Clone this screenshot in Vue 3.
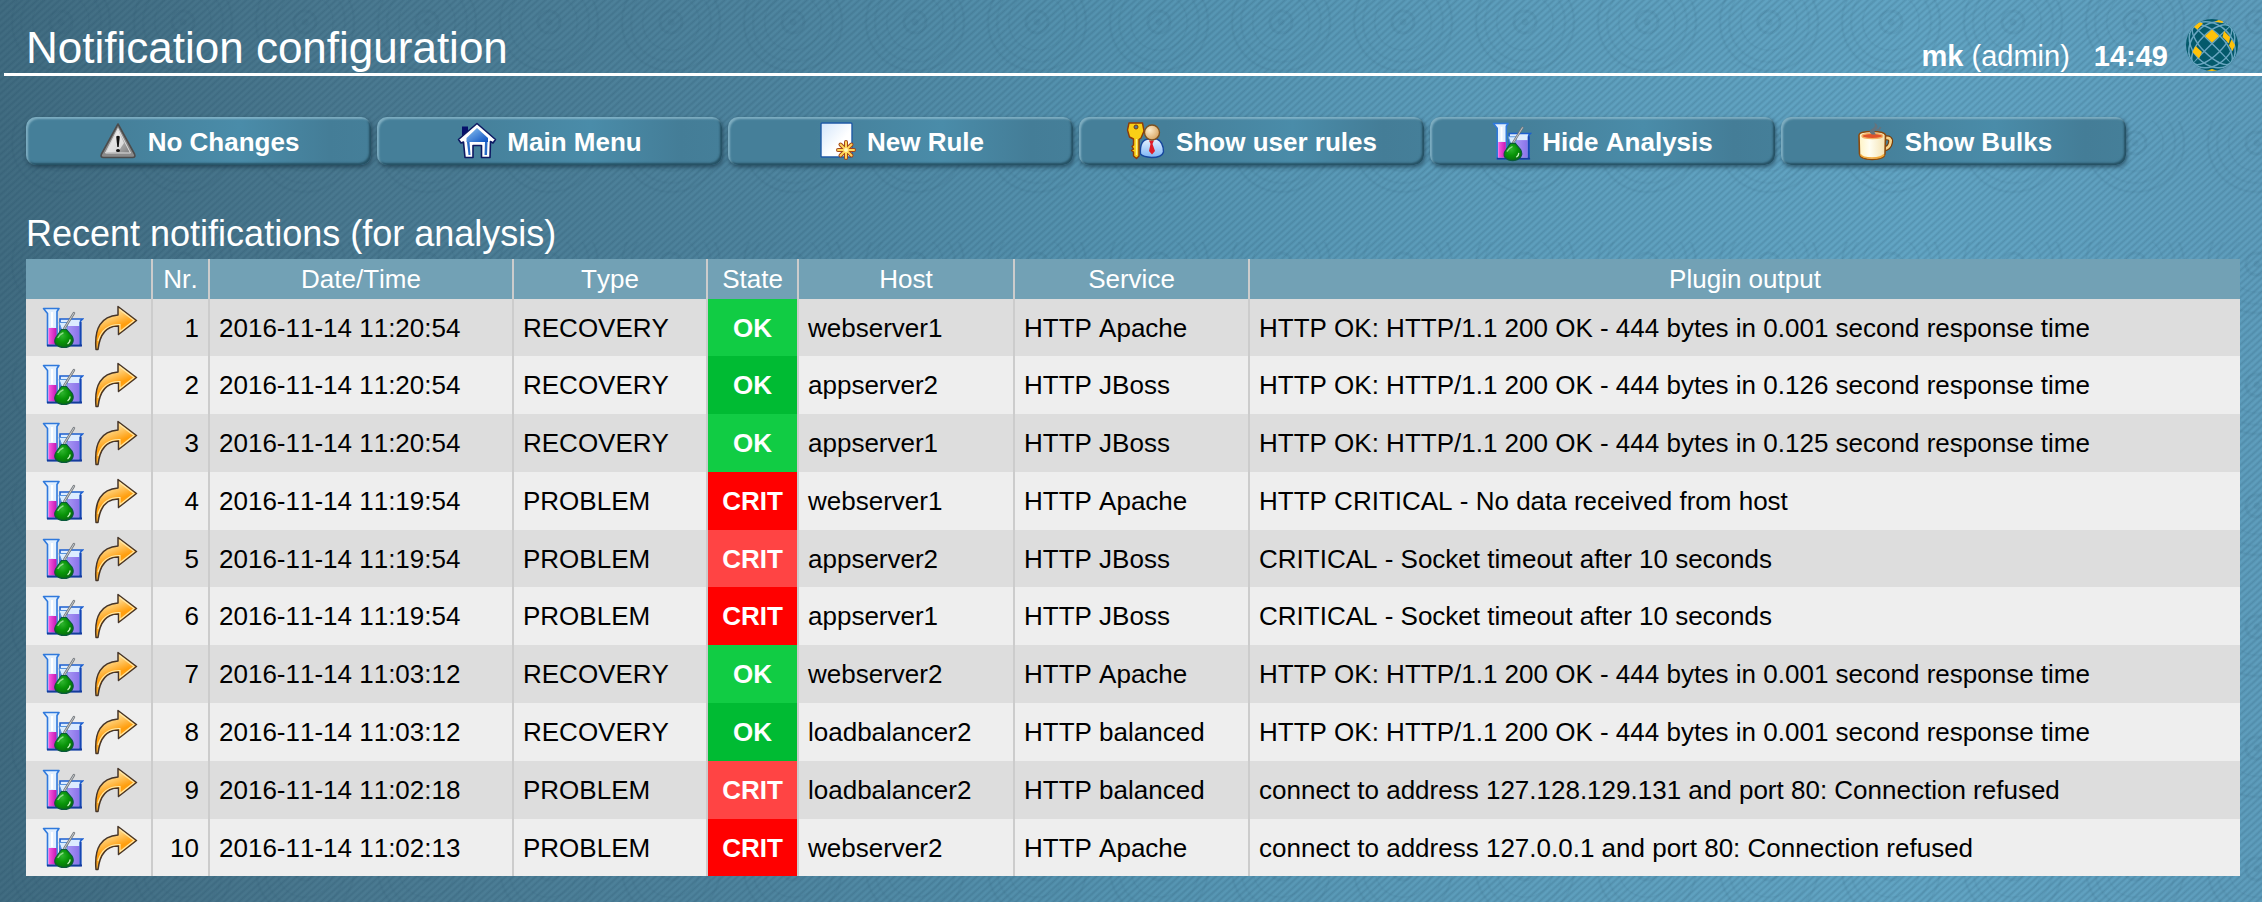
<script setup>
const actions = [
  { icon: 'warning', label: 'No Changes' },
  { icon: 'home', label: 'Main Menu' },
  { icon: 'new', label: 'New Rule' },
  { icon: 'users', label: 'Show user rules' },
  { icon: 'analyze', label: 'Hide Analysis' },
  { icon: 'bulk', label: 'Show Bulks' },
]

const columns = ['', 'Nr.', 'Date/Time', 'Type', 'State', 'Host', 'Service', 'Plugin output']

const httpOk = (t) => `HTTP OK: HTTP/1.1 200 OK - 444 bytes in ${t} second response time`

const rows = [
  ['2016-11-14 11:20:54', 'RECOVERY', 'OK', 'webserver1', 'HTTP Apache', httpOk('0.001')],
  ['2016-11-14 11:20:54', 'RECOVERY', 'OK', 'appserver2', 'HTTP JBoss', httpOk('0.126')],
  ['2016-11-14 11:20:54', 'RECOVERY', 'OK', 'appserver1', 'HTTP JBoss', httpOk('0.125')],
  ['2016-11-14 11:19:54', 'PROBLEM', 'CRIT', 'webserver1', 'HTTP Apache', 'HTTP CRITICAL - No data received from host'],
  ['2016-11-14 11:19:54', 'PROBLEM', 'CRIT', 'appserver2', 'HTTP JBoss', 'CRITICAL - Socket timeout after 10 seconds'],
  ['2016-11-14 11:19:54', 'PROBLEM', 'CRIT', 'appserver1', 'HTTP JBoss', 'CRITICAL - Socket timeout after 10 seconds'],
  ['2016-11-14 11:03:12', 'RECOVERY', 'OK', 'webserver2', 'HTTP Apache', httpOk('0.001')],
  ['2016-11-14 11:03:12', 'RECOVERY', 'OK', 'loadbalancer2', 'HTTP balanced', httpOk('0.001')],
  ['2016-11-14 11:02:18', 'PROBLEM', 'CRIT', 'loadbalancer2', 'HTTP balanced', 'connect to address 127.128.129.131 and port 80: Connection refused'],
  ['2016-11-14 11:02:13', 'PROBLEM', 'CRIT', 'webserver2', 'HTTP Apache', 'connect to address 127.0.0.1 and port 80: Connection refused'],
].map(([time, type, state, host, service, output], i) => ({ nr: i + 1, time, type, state, host, service, output }))

const meridians = [-20, -12, -1, 10, 19].map(
  (u) => `M0 -26A${Math.abs(u)} 26 0 0 ${u > 0 ? 1 : 0} 0 26`,
)
</script>

<template>
  <div class="page">
    <!-- shared gradients and symbols -->
    <svg class="defs" width="0" height="0" aria-hidden="true">
      <defs>
        <linearGradient id="g-grey" x1="0" y1="0" x2="1" y2="1">
          <stop offset="0" stop-color="#f4f4f4" /><stop offset="1" stop-color="#7d7d7d" />
        </linearGradient>
        <linearGradient id="g-house" x1="0" y1="0" x2="1" y2="1">
          <stop offset="0" stop-color="#8cc4f2" /><stop offset="1" stop-color="#0a4fc0" />
        </linearGradient>
        <linearGradient id="g-paper" x1="0" y1="0" x2="1" y2="1">
          <stop offset="0" stop-color="#d3e5fb" /><stop offset="0.6" stop-color="#ffffff" />
        </linearGradient>
        <linearGradient id="g-arrow" x1="0" y1="0" x2="0.4" y2="1">
          <stop offset="0" stop-color="#fff0cc" /><stop offset="0.35" stop-color="#ffce73" />
          <stop offset="0.6" stop-color="#ff9d0c" /><stop offset="1" stop-color="#ffc04a" />
        </linearGradient>
        <radialGradient id="g-green" cx="0.4" cy="0.35" r="0.7">
          <stop offset="0" stop-color="#2fb52f" /><stop offset="0.5" stop-color="#089408" /><stop offset="1" stop-color="#066a0e" />
        </radialGradient>
        <radialGradient id="g-head" cx="0.35" cy="0.35" r="0.7">
          <stop offset="0" stop-color="#fdeccb" /><stop offset="1" stop-color="#d9a561" />
        </radialGradient>
        <linearGradient id="g-coat" x1="0" y1="0" x2="0" y2="1">
          <stop offset="0" stop-color="#e4f1ff" /><stop offset="1" stop-color="#7db5f7" />
        </linearGradient>
        <linearGradient id="g-cup" x1="0" y1="0" x2="1" y2="0">
          <stop offset="0" stop-color="#fff3c4" /><stop offset="0.4" stop-color="#fffef2" /><stop offset="1" stop-color="#f4e2b0" />
        </linearGradient>
        <linearGradient id="g-pink" x1="0" y1="0" x2="1" y2="0">
          <stop offset="0" stop-color="#f95fe0" /><stop offset="1" stop-color="#c416b4" />
        </linearGradient>
        <linearGradient id="g-violet" x1="0" y1="0" x2="1" y2="0">
          <stop offset="0" stop-color="#b3a6f7" /><stop offset="1" stop-color="#8a72ea" />
        </linearGradient>
      </defs>

      <symbol id="i-warning" viewBox="0 0 40 40">
        <path d="M20 2L36.500 32Q38 35.500 34.500 35.500H5.500Q2 35.500 3.500 32Z" fill="#8b8b8b" stroke="#4c4c4c" stroke-width="1.600" stroke-linejoin="round" />
        <path d="M20 6.500L32.500 31H7.500Z" fill="url(#g-grey)" stroke="#dedede" stroke-width="1" />
        <path d="M20 8L26 21L20 30H8.500Z" fill="#fff" opacity="0.6" />
        <path d="M18.200 14.500Q20 13 21.800 14.500L20.700 25H19.300Z" fill="#111" />
        <ellipse cx="20" cy="28.500" rx="2" ry="1.600" fill="#111" />
      </symbol>

      <symbol id="i-home" viewBox="0 0 40 40">
        <path d="M5 4.500H11V15H5Z" fill="#06106b" />
        <path d="M20 1.500L38.500 17.500L36 21L33.500 19.500L33 35.500H24.500V23.500H16V35.500H8L6.500 20L4 21L1.500 17.500Z" fill="#fff" stroke="#0d1a63" stroke-width="1.600" stroke-linejoin="round" />
        <path d="M20 6L31 16V20H9.500V16Z" fill="url(#g-house)" />
        <path d="M28 20H30.500L30 33H27.500ZM10 20H12.500L13.500 33H11.500Z" fill="#2a6cc8" />
      </symbol>

      <symbol id="i-new" viewBox="0 0 40 40">
        <rect x="4" y="1" width="31" height="34" rx="1" fill="url(#g-paper)" stroke="#1f5aa6" stroke-width="1.400" />
        <g stroke-linecap="round">
          <path d="M29 20V36M21 28H37M23.500 22.500L34.500 33.500M34.500 22.500L23.500 33.500" stroke="#a3461a" stroke-width="4" />
          <path d="M29 20V36M21 28H37M23.500 22.500L34.500 33.500M34.500 22.500L23.500 33.500" stroke="#ffd75c" stroke-width="2" />
        </g>
        <circle cx="29" cy="28" r="2" fill="#fff7b5" />
      </symbol>

      <symbol id="i-users" viewBox="0 0 40 40">
        <path d="M14.500 32Q13.500 18 22 17H31Q37.500 20 37.500 30Q36 35.500 25.500 35.500Q17 35 14.500 32Z" fill="url(#g-coat)" stroke="#16479e" stroke-width="1.400" />
        <path d="M23 18.500H28L26.500 22L29 29L26 32.500L23 29L24.500 22Z" fill="#df1c27" />
        <circle cx="26" cy="10.500" r="7.500" fill="url(#g-head)" stroke="#7d511f" stroke-width="1.300" />
        <path d="M3 1H16.500L18 9L15 16L13 17.500L13 34L10.500 36.500L7.500 34L7.500 30L5.500 28.500L7.500 27L6 24.500L7.500 23V17L3.500 15L1.500 8Z" fill="#f9cf16" stroke="#8d3b08" stroke-width="1.400" stroke-linejoin="round" />
        <circle cx="10" cy="5" r="2" fill="#4b78a0" stroke="#7d3b08" stroke-width="1" />
        <path d="M10.500 17V33" stroke="#fff08c" stroke-width="1.400" />
      </symbol>

      <symbol id="i-analyze" viewBox="0 0 42 42">
        <path d="M18 12H40.500L38.500 14V38.500H18Z" fill="#dcecff" stroke="#1c5fd0" stroke-width="1.600" />
        <path d="M20 19H37.500V37.500H20Z" fill="url(#g-violet)" />
        <path d="M38.500 15V38.500" stroke="#1746b3" stroke-width="2" />
        <path d="M1.500 1.500H17L15 4.500V38.500H5.500V6.500Z" fill="#e2f0ff" stroke="#2f79dc" stroke-width="1.600" stroke-linejoin="round" />
        <path d="M6.500 21H14.500V37.500H6.500Z" fill="url(#g-pink)" />
        <path d="M10 5V20" stroke="#fff" stroke-width="2" />
        <path d="M5 38.500H40" stroke="#153a9b" stroke-width="2" />
        <path d="M17 15.500H26L24.500 23.500H20Z" fill="#d8ecff" stroke="#5693dc" stroke-width="1" />
        <path d="M32 6L22 22" stroke="#74787c" stroke-width="2.400" stroke-linecap="round" />
        <path d="M32 6L22 22" stroke="#dcdfe2" stroke-width="0.800" stroke-linecap="round" />
        <path d="M19.500 22.500H24.500L30 29Q32.500 33.500 30 37Q27 40.500 22 40.500T13.500 37Q11.500 33.500 14.500 29.500Z" fill="url(#g-green)" stroke="#0a5a3c" stroke-width="1.200" />
        <path d="M16 30.500Q18 27 21 26" fill="none" stroke="#8fdd8a" stroke-width="1.400" stroke-linecap="round" />
        <path d="M26 36.500Q28 35 28 33" fill="none" stroke="#c6f3c0" stroke-width="1.400" stroke-linecap="round" />
      </symbol>

      <symbol id="i-bulk" viewBox="0 0 40 40">
        <path d="M30 16Q36.500 15 35.500 20.500Q34.500 26 29 27" fill="none" stroke="#7a3e09" stroke-width="5" />
        <path d="M30 16Q36.500 15 35.500 20.500Q34.500 26 29 27" fill="none" stroke="#f7d48c" stroke-width="2.600" />
        <path d="M4 13Q4.500 9.500 17 9.500Q29.500 9.500 30.500 13L30 32Q29.500 37 17 37.500Q5 37 4.500 32Z" fill="url(#g-cup)" stroke="#8d4a0c" stroke-width="1.600" />
        <path d="M5.500 32.500Q7 36 17 36T29 32.500" fill="none" stroke="#f2a93a" stroke-width="1.600" />
        <ellipse cx="17.300" cy="14" rx="10.500" ry="2.600" fill="#e0532a" stroke="#f3b062" stroke-width="1.200" />
        <path d="M17 12.500Q12 9.500 17.500 6.500Q21.500 4 19 0.500Q25 3.500 21 7.500Q18 9.500 21 12.500Z" fill="#66737c" />
        <path d="M21.500 8Q25 8 25.500 5" fill="none" stroke="#66737c" stroke-width="1.600" />
      </symbol>

      <symbol id="i-arrow" viewBox="0 0 44 46">
        <path d="M24 1.500L42.500 15.500L24.500 29.500V21Q7 20.500 4 44.500H2Q-1 12 24 10Z" fill="url(#g-arrow)" stroke="#463528" stroke-width="1.500" stroke-linejoin="round" />
        <path d="M25.500 4.500L40 15.500L26 26.500V19.500Q9 19 4 36" fill="none" stroke="#ffe9a8" stroke-width="1.100" />
      </symbol>
    </svg>

    <header class="top">
      <h1>Notification configuration</h1>
      <div class="status">
        <span><b>mk</b> (admin)</span>
        <b>14:49</b>
        <svg class="globe" viewBox="0 0 52 52" aria-hidden="true">
          <clipPath id="ball"><circle cx="26" cy="26" r="26" /></clipPath>
          <g clip-path="url(#ball)">
            <rect width="52" height="52" fill="#045a6c" />
            <g transform="translate(26 26) rotate(45)" fill="none" stroke="#68a5c0" stroke-width="1.500">
              <path v-for="d in meridians" :key="d" :d="d" />
              <path v-for="d in meridians" :key="'r' + d" :d="d" transform="rotate(90)" />
            </g>
            <g fill="#ffc20a">
              <path d="M26 10.500L33 17L26 23.500L19 17Z" />
              <path d="M38 12L44 18L43 24.500L36.500 18Z" />
              <path d="M45.500 20.500L49 26L46.500 32L43 26.500Z" />
              <path d="M9.500 27L16 33L13 39.500L6.500 33Z" />
              <path d="M8 8L13 3L17 4.500L11.500 10.500Z" />
              <path d="M28.500 2.500L33 1H38L36.500 4Z" />
              <path d="M20 52L26 50L32 52Z" />
            </g>
          </g>
        </svg>
      </div>
    </header>

    <nav class="actions">
      <a v-for="a in actions" :key="a.label" href="#" class="action">
        <svg class="action-icon" aria-hidden="true"><use :href="'#i-' + a.icon" /></svg>
        <span>{{ a.label }}</span>
      </a>
    </nav>

    <main>
      <h2 id="recent">Recent notifications (for analysis)</h2>
      <table aria-labelledby="recent">
        <colgroup>
          <col class="c-icons" /><col class="c-nr" /><col class="c-time" /><col class="c-type" />
          <col class="c-state" /><col class="c-host" /><col class="c-service" /><col />
        </colgroup>
        <thead>
          <tr><th v-for="c in columns" :key="c" scope="col">{{ c }}</th></tr>
        </thead>
        <tbody>
          <tr v-for="r in rows" :key="r.nr">
            <td>
              <div class="tools">
                <a href="#" :aria-label="'Analyze notification ' + r.nr"><svg class="tool-analyze"><use href="#i-analyze" /></svg></a>
                <a href="#" :aria-label="'Replay notification ' + r.nr"><svg class="tool-arrow"><use href="#i-arrow" /></svg></a>
              </div>
            </td>
            <td class="nr">{{ r.nr }}</td>
            <td>{{ r.time }}</td>
            <td>{{ r.type }}</td>
            <td class="state" :class="r.state.toLowerCase()">{{ r.state }}</td>
            <td>{{ r.host }}</td>
            <td>{{ r.service }}</td>
            <td>{{ r.output }}</td>
          </tr>
        </tbody>
      </table>
    </main>
  </div>
</template>

<style>
body {
  margin: 0;
  min-height: 100vh;
  background:
    radial-gradient(circle at 61px 22px, rgba(30, 70, 95, 0.08) 0 3px, transparent 4px 9px, rgba(30, 70, 95, 0.08) 10px 12px, transparent 13px 27px, rgba(30, 70, 95, 0.07) 28px, transparent 30px 38px, rgba(30, 70, 95, 0.07) 40px, transparent 42px 47px, rgba(30, 70, 95, 0.09) 49px, transparent 51px) 0 0 / 122px 121px,
    repeating-linear-gradient(138deg, rgba(20, 60, 85, 0.17) 0, rgba(20, 60, 85, 0) 2px, rgba(20, 60, 85, 0) 3px, rgba(20, 60, 85, 0.17) 5px),
    linear-gradient(90deg, #416c81 0%, #4a7990 15%, #4e849e 33%, #5594b1 50%, #5e9fbd 68%, #62a5c4 85%, #5e9dbc 100%);
}
</style>

<style scoped>
.page {
  font-family: "Liberation Sans", Arial, sans-serif;
  font-size: 26px;
  line-height: 30px;
  font-kerning: none;
  color: #fff;
}
.defs { position: absolute; }
.top {
  display: flex;
  justify-content: space-between;
  align-items: flex-end;
  box-sizing: border-box;
  height: 76px;
  margin-left: 4px;
  padding: 0 24px 0 22px;
  border-bottom: 3px solid #fff;
}
h1 {
  margin: 0;
  font-size: 44px;
  line-height: 50px;
  font-weight: 400;
}
.status {
  display: flex;
  align-items: flex-end;
  gap: 24px;
  font-size: 29px;
  line-height: 34px;
}
.globe {
  width: 52px;
  height: 52px;
  margin-left: -6px;
  margin-bottom: 2px;
}
.actions {
  display: flex;
  flex-wrap: wrap;
  gap: 6px;
  padding: 41px 22px 0 26px;
}
.action {
  display: flex;
  align-items: center;
  justify-content: center;
  gap: 10px;
  box-sizing: border-box;
  width: 345px;
  height: 48px;
  padding-top: 2px;
  border-radius: 10px;
  color: #fff;
  font-weight: 700;
  text-decoration: none;
  background: linear-gradient(90deg, #457f99 0%, #457f99 25%, #4a8ca9 62%, #447d97 88%, #457f99 100%);
  box-shadow:
    inset 2px 2px 2px rgba(165, 205, 220, 0.6),
    inset -2px -2px 2px rgba(20, 55, 70, 0.65),
    1px 2px 4px rgba(15, 40, 55, 0.6);
}
.action-icon { width: 40px; height: 40px; flex: none; }
h2 {
  margin: 0;
  font-size: 36px;
  line-height: 42px;
  font-weight: 400;
}
main { padding: 48px 22px 0 26px; }
table {
  width: 100%;
  margin-top: 4px;
  table-layout: fixed;
  border-collapse: separate;
  border-spacing: 0;
  color: #000;
}
.c-icons { width: 125px; }
.c-nr { width: 57px; }
.c-time { width: 304px; }
.c-type { width: 194px; }
.c-state { width: 91px; }
.c-host { width: 216px; }
.c-service { width: 235px; }
th {
  height: 40px;
  padding: 0;
  font-weight: 400;
  color: #fff;
  background: #72a1b5;
}
td {
  height: 58px;
  padding: 0 9px;
  white-space: nowrap;
}
tr:first-child td,
tr:nth-child(5n) td { height: 57px; }
th + th,
td + td { border-left: 2px solid #ccc; }
tbody tr:nth-child(odd) { background: #ddd; }
tbody tr:nth-child(even) { background: #eee; }
.nr { text-align: right; }
.state {
  padding: 0;
  text-align: center;
  font-weight: 700;
  color: #fff;
}
.ok { background: #0b3; background-clip: padding-box; }
.crit { background: #f00; background-clip: padding-box; }
tr:nth-child(odd) .ok { background-color: #1c4; }
tr:nth-child(odd) .crit { background-color: #f44; }
.tools { display: flex; align-items: center; gap: 10px; padding-left: 7px; }
.tools a { display: flex; }
.tool-analyze { width: 42px; height: 42px; }
.tool-arrow { width: 44px; height: 46px; }
</style>
